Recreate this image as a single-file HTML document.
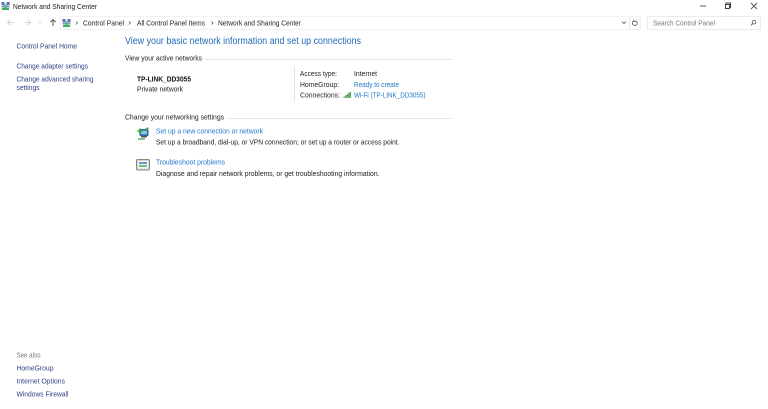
<!DOCTYPE html>
<html>
<head>
<meta charset="utf-8">
<style>
html,body{margin:0;padding:0;background:#fff;width:768px;height:409px;overflow:hidden}
svg{display:block;filter:blur(.3px)}
text{font-family:"Liberation Sans",sans-serif;font-size:7.4px;fill:#222}
.k{fill:#222}
.l{fill:#2277cc}
.n{fill:#334080}
.g{fill:#777}
</style>
</head>
<body>
<svg width="768" height="409" viewBox="0 0 768 409" xmlns="http://www.w3.org/2000/svg">
<defs>
<g id="net">
<rect x="0" y="0" width="3" height="3" fill="#5a70b8"/>
<rect x="5" y="0" width="3" height="3" fill="#5a70b8"/>
<rect x="0" y="3.500" width="3" height="2" fill="#7f92d0"/>
<rect x="5" y="3.500" width="3" height="2" fill="#7f92d0"/>
<rect x="3" y="2.500" width="2" height="3.500" fill="#45b56a"/>
<rect x="0.500" y="6" width="7" height="2" fill="#38b060"/>
</g>
</defs>

<!-- title bar -->
<use href="#net" x="1.500" y="2"/>
<text x="13" y="9" textLength="84" lengthAdjust="spacingAndGlyphs" class="k">Network and Sharing Center</text>
<path d="M700 6h6" stroke="#555" stroke-width="1"/>
<path d="M726 4.500v-1.500h4.500v4.500h-1.500M725.500 4.500h4v4h-4z" fill="none" stroke="#444" stroke-width="1"/>
<path d="M751 3l6 6M757 3l-6 6" stroke="#555" stroke-width=".9"/>

<!-- nav -->
<path d="M7.500 22.500h6M7.500 22.500l2.500-2.500M7.500 22.500l2.500 2.500" fill="none" stroke="#d4d4d4" stroke-width="1"/>
<path d="M30.500 22.500h-6M30.500 22.500l-2.500-2.500M30.500 22.500l-2.500 2.500" fill="none" stroke="#d4d4d4" stroke-width="1"/>
<path d="M38.500 21.500l1.500 1.500 1.500-1.500" fill="none" stroke="#d8d8d8" stroke-width=".8"/>
<path d="M53 26v-6.500M53 19.500l-2.700 2.700M53 19.500l2.700 2.700" fill="none" stroke="#555" stroke-width="1"/>

<!-- address box -->
<rect x="60.500" y="16.500" width="580" height="13" fill="#fff" stroke="#f2f2f2"/>
<path d="M629.500 16.500v13" stroke="#eaeaea"/>
<use href="#net" x="62.500" y="19"/>
<path d="M76 21.500l1.500 1.500-1.500 1.500M129 21.500l1.500 1.500-1.500 1.500M211.500 21.500l1.500 1.500-1.500 1.500" fill="none" stroke="#555" stroke-width=".8"/>
<text x="83" y="25.500" textLength="41" lengthAdjust="spacingAndGlyphs" class="k">Control Panel</text>
<text x="137" y="25.500" textLength="68" lengthAdjust="spacingAndGlyphs" class="k">All Control Panel Items</text>
<text x="218" y="25.500" textLength="83" lengthAdjust="spacingAndGlyphs" class="k">Network and Sharing Center</text>
<path d="M622 21.500l2 2 2-2" fill="none" stroke="#555" stroke-width=".8"/>
<path d="M633.500 21a2.400 2.400 0 1 0 2.500 0M634 19.800v1.700h1.700" fill="none" stroke="#555" stroke-width=".8"/>

<!-- search -->
<rect x="647.500" y="16.500" width="113" height="13" fill="#fff" stroke="#ececec"/>
<text x="653" y="25.500" textLength="62" lengthAdjust="spacingAndGlyphs" class="g">Search Control Panel</text>
<circle cx="754" cy="22.200" r="1.800" fill="none" stroke="#555" stroke-width=".8"/>
<path d="M752.700 23.600l-1.500 1.700" stroke="#555" stroke-width=".9"/>

<!-- left nav -->
<text x="16.500" y="48.500" textLength="60.500" lengthAdjust="spacingAndGlyphs" class="n">Control Panel Home</text>
<text x="16.500" y="68.500" textLength="71.500" lengthAdjust="spacingAndGlyphs" class="n">Change adapter settings</text>
<text x="16.500" y="81.500" textLength="77" lengthAdjust="spacingAndGlyphs" class="n">Change advanced sharing</text>
<text x="16.500" y="90" textLength="23" lengthAdjust="spacingAndGlyphs" class="n">settings</text>
<text x="16.500" y="357.500" textLength="24" lengthAdjust="spacingAndGlyphs" class="g">See also</text>
<text x="16.500" y="370.500" textLength="37" lengthAdjust="spacingAndGlyphs" class="n">HomeGroup</text>
<text x="16.500" y="383.500" textLength="48.500" lengthAdjust="spacingAndGlyphs" class="n">Internet Options</text>
<text x="16.500" y="396.500" textLength="52" lengthAdjust="spacingAndGlyphs" class="n">Windows Firewall</text>

<!-- heading -->
<text x="125" y="44" textLength="236" lengthAdjust="spacingAndGlyphs" style="font-size:9.800px;fill:#1f6ab8">View your basic network information and set up connections</text>

<!-- active networks -->
<text x="125" y="60.500" textLength="77" lengthAdjust="spacingAndGlyphs" class="k">View your active networks</text>
<path d="M205 59.500h247" stroke="#e4e4e4"/>
<text x="137" y="81.500" textLength="54" lengthAdjust="spacingAndGlyphs" style="font-weight:bold;fill:#111">TP-LINK_DD3055</text>
<text x="137" y="91.500" textLength="46" lengthAdjust="spacingAndGlyphs" class="k">Private network</text>
<path d="M294.500 66v36" stroke="#e4e4e4"/>
<text x="300" y="76" textLength="37" lengthAdjust="spacingAndGlyphs" class="k">Access type:</text>
<text x="354" y="76" textLength="23" lengthAdjust="spacingAndGlyphs" class="k">Internet</text>
<text x="300" y="87" textLength="39" lengthAdjust="spacingAndGlyphs" class="k">HomeGroup:</text>
<text x="354" y="87" textLength="45" lengthAdjust="spacingAndGlyphs" class="l">Ready to create</text>
<text x="300" y="97.500" textLength="40" lengthAdjust="spacingAndGlyphs" class="k">Connections:</text>
<path d="M343 98h8v-6.500z" fill="#9cc79c"/>
<path d="M343.500 97.500h1.200v-1h-1.200zM345.500 97.500h1.200v-2.500h-1.200zM347.500 97.500h1.200v-4h-1.200zM349.500 97.500h1.200v-5.500h-1.200z" fill="#3e9a4e"/>
<text x="354" y="97.500" textLength="71.500" lengthAdjust="spacingAndGlyphs" class="l">Wi-Fi (TP-LINK_DD3055)</text>

<!-- change settings -->
<text x="125" y="119.500" textLength="99" lengthAdjust="spacingAndGlyphs" class="k">Change your networking settings</text>
<path d="M227 118.500h225" stroke="#e4e4e4"/>

<!-- setup icon -->
<rect x="139.500" y="129" width="9" height="7" rx="1" fill="#2f5f98"/>
<rect x="141" y="130.500" width="6" height="4" fill="#8cc2e8"/>
<path d="M137.500 131h5M140 128.500v5" stroke="#2da84a" stroke-width="1.800"/>
<path d="M141 136h6v1.500h-6z" fill="#555"/>
<path d="M138 139h7" stroke="#3aa858" stroke-width="1.300"/>
<circle cx="147" cy="129" r="1.500" fill="#4aa050"/>
<text x="156" y="133.500" textLength="107" lengthAdjust="spacingAndGlyphs" class="l">Set up a new connection or network</text>
<text x="156" y="144.500" textLength="243.500" lengthAdjust="spacingAndGlyphs" class="k">Set up a broadband, dial-up, or VPN connection; or set up a router or access point.</text>

<!-- troubleshoot icon -->
<rect x="136.500" y="159.500" width="13" height="10.500" rx="1" fill="#d8d8d8" stroke="#888"/>
<rect x="138" y="161" width="10" height="7.500" fill="#f2f2f2"/>
<path d="M139 163h8" stroke="#2b6cb0" stroke-width="1.300"/>
<path d="M139 166h8" stroke="#2ea84f" stroke-width="1.300"/>
<text x="156" y="164.500" textLength="69" lengthAdjust="spacingAndGlyphs" class="l">Troubleshoot problems</text>
<text x="156" y="176" textLength="223.500" lengthAdjust="spacingAndGlyphs" class="k">Diagnose and repair network problems, or get troubleshooting information.</text>
</svg>
</body>
</html>
